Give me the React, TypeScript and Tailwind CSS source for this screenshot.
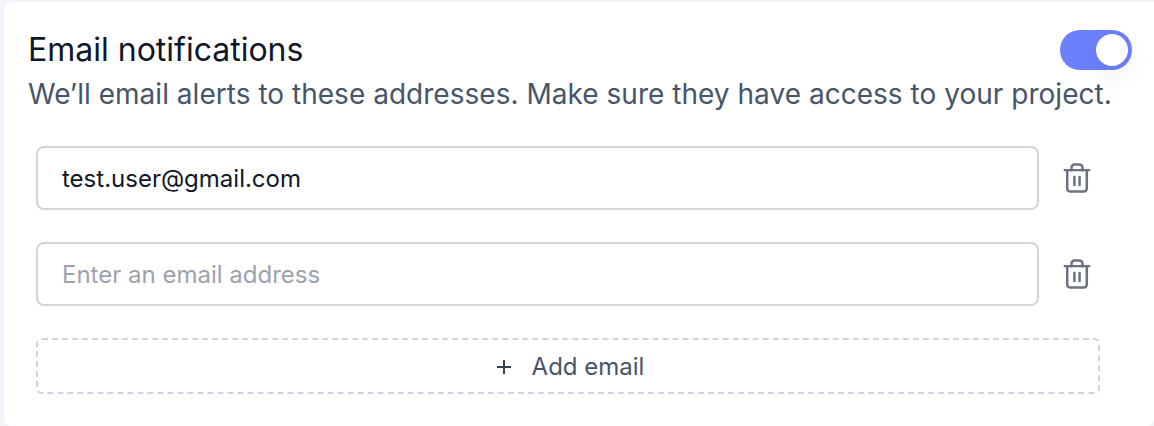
import { useState } from "react";

function TrashIcon() {
  return (
    <svg width="28" height="32" viewBox="0 0 28 32" fill="none" stroke="currentColor" strokeWidth="2.5" strokeLinecap="round" strokeLinejoin="round">
      <path d="M1.7 8.2h24.6" strokeWidth="2.3" />
      <path d="M4.2 8.2v18.4a3 3 0 0 0 3 3h13.6a3 3 0 0 0 3-3V8.2M8.5 8.2V5.4a3 3 0 0 1 3-3h5a3 3 0 0 1 3 3v2.8" />
      <path d="M11.4 15v8M16.6 15v8" />
    </svg>
  );
}

function EmailRow({ value, onChange, label }: { value: string; onChange: (v: string) => void; label: string }) {
  return (
    <div className="flex h-16 items-center">
      <input
        type="text"
        aria-label={label}
        value={value}
        onChange={(e) => onChange(e.target.value)}
        placeholder="Enter an email address"
        className="h-16 w-[1003px] rounded-lg border-2 border-[#d1d5db] bg-white px-6 text-2xl text-[#0f172a] outline-none placeholder:text-[#9ca3af]"
      />
      <button type="button" aria-label="Remove email" className="ml-6 text-[#6b7280]">
        <TrashIcon />
      </button>
    </div>
  );
}

export default function App() {
  const [first, setFirst] = useState("test.user@gmail.com");
  const [second, setSecond] = useState("");
  const [on, setOn] = useState(true);
  return (
    <div className="h-[426px] w-[1154px] overflow-hidden bg-slate-100 pt-0.5 pl-1 font-['Inter',sans-serif] antialiased">
      <section className="h-[424px] rounded-l-lg rounded-br-lg bg-white pt-6 pl-6">
        <header className="flex h-12 items-center justify-between pr-[22px]">
          <h2 className="text-[32px] leading-12 text-[#0f172a]">Email notifications</h2>
          <button
            type="button"
            role="switch"
            aria-checked={on}
            aria-label="Email notifications"
            onClick={() => setOn(!on)}
            className={`flex h-10 w-[72px] items-center rounded-full px-1 ${on ? "justify-end bg-[#6b80fb]" : "justify-start bg-slate-300"}`}
          >
            <span className="size-8 rounded-full bg-white shadow-[0_8px_24px_4px_rgba(0,0,0,0.05)]" />
          </button>
        </header>
        <p className="h-10 text-[28px] leading-10 tracking-[0.025px] whitespace-nowrap text-[#475569]">
          We’ll email alerts to these addresses. Make sure they have access to your project.
        </p>
        <div className="mt-8 flex flex-col gap-8 pl-2">
          <EmailRow label="First email" value={first} onChange={setFirst} />
          <EmailRow label="Second email" value={second} onChange={setSecond} />
          <button type="button" className="flex h-14 w-[1064px] items-center justify-center gap-5 rounded-md border-2 border-dashed border-[#cbd5e1] pt-0.5 pl-1 text-2xl text-[#475569]">
            <svg width="16" height="16" viewBox="0 0 16 16" fill="none" stroke="#334155" strokeWidth="2">
              <path d="M8 1v14M1 8h14" />
            </svg>
            Add email
          </button>
        </div>
      </section>
    </div>
  );
}
